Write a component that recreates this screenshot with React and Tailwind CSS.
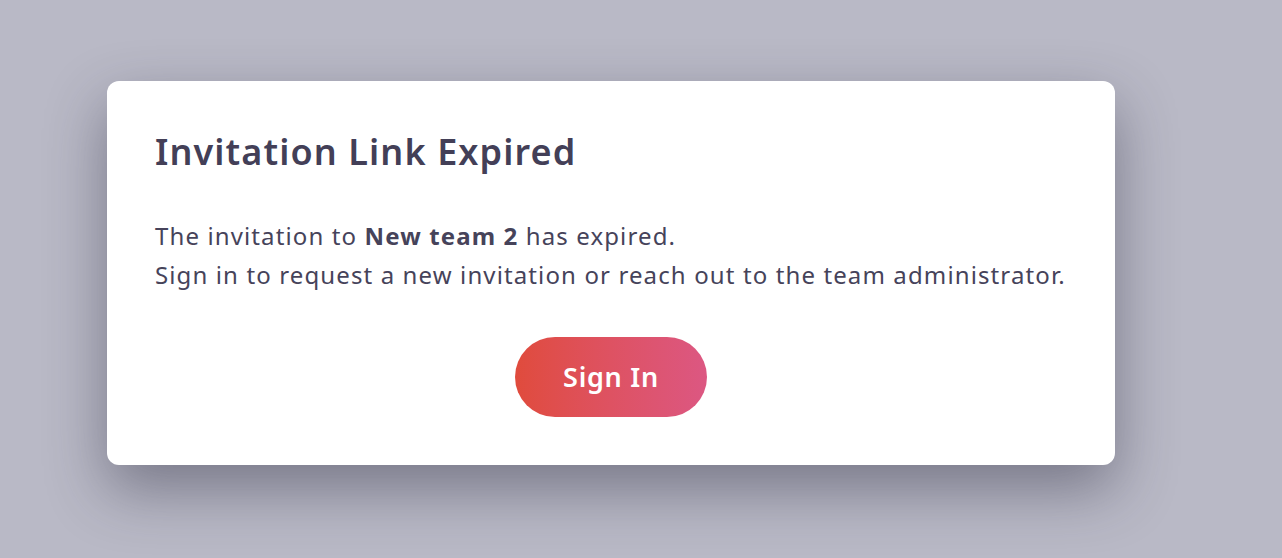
export default function App() {
  return (
    <div className="min-h-[558px] w-full bg-[#b9b9c6] pt-[81px] pl-[107px] font-['Noto_Sans',sans-serif] text-[#46435a]">
      <div className="w-[1008px] rounded-[12px] bg-white px-12 pt-12 pb-12 shadow-[0_24px_60px_rgba(40,40,60,0.45)]">
        <h1 className="text-[36px] font-semibold leading-[45px] tracking-[1.1px] text-[#433f57]">Invitation Link Expired</h1>
        <p className="mt-[42px] text-[24px] leading-[39px] tracking-[1.12px]">
          The invitation to <span className="font-bold">New team 2</span> has expired.
          <br />
          Sign in to request a new invitation or reach out to the team administrator.
        </p>
        <div className="mt-[43px] flex justify-center">
          <button className="h-[80px] w-[192px] rounded-full bg-gradient-to-r from-[#e04b3c] to-[#dc5782] text-[27px] font-semibold tracking-[0.7px] text-white">
            Sign In
          </button>
        </div>
      </div>
    </div>
  );
}
